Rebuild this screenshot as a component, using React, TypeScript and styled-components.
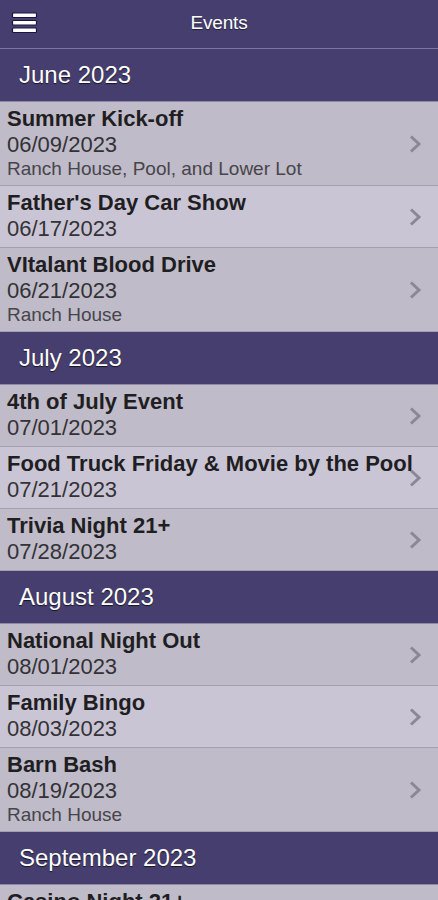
import React from 'react'
import styled, { createGlobalStyle } from 'styled-components'

const GlobalStyle = createGlobalStyle`
  html, body {
    margin: 0;
    padding: 0;
    background: #c9c4d4;
    font-family: "Liberation Sans", Arial, Helvetica, sans-serif;
  }
`

const Page = styled.div`
  width: 438px;
  display: flex;
  flex-direction: column;
`

const TopBar = styled.header`
  height: 48px;
  display: flex;
  align-items: center;
  justify-content: center;
  position: relative;
  background: #463e6e;
  border-bottom: 1px solid #7d77a0;
`

const MenuButton = styled.div`
  position: absolute;
  left: 11px;
  top: 12px;
  width: 27px;
  height: 22px;
`

const Title = styled.div`
  color: #ffffff;
  font-size: 19px;
  letter-spacing: -0.2px;
  margin-top: -2px;
  text-shadow: 0 1px 1px rgba(0, 0, 0, 0.5);
`

const SectionHeader = styled.div`
  height: 52px;
  display: flex;
  align-items: center;
  padding-left: 19px;
  background: #463e6e;
  border-bottom: 1px solid #8e89a6;
  color: #ffffff;
  font-size: 24px;
  text-shadow: 0 1px 1px rgba(0, 0, 0, 0.7);
`

const Row = styled.div<{ $alt: boolean }>`
  position: relative;
  padding: 4px 0 5px 7px;
  background: ${(p) => (p.$alt ? '#cac5d5' : '#bfbbc8')};
  border-bottom: 1px solid #a39fb0;
`

const EventName = styled.div`
  font-size: 22px;
  line-height: 25px;
  font-weight: bold;
  color: #1f1e22;
  white-space: nowrap;
`

const EventDate = styled.div`
  font-size: 22px;
  line-height: 27px;
  color: #333236;
`

const EventPlace = styled.div`
  font-size: 19px;
  line-height: 22px;
  color: #47454b;
`

// row accessory, sits over the end of long titles
const Chevron = styled.svg`
  position: absolute;
  right: 16px;
  top: 50%;
  margin-top: -10px;
  width: 14px;
  height: 20px;
`

type Ev = { name: string; date: string; place?: string }
type Section = { month: string; events: Ev[] }

const sections: Section[] = [
  {
    month: 'June 2023',
    events: [
      { name: 'Summer Kick-off', date: '06/09/2023', place: 'Ranch House, Pool, and Lower Lot' },
      { name: "Father's Day Car Show", date: '06/17/2023' },
      { name: 'VItalant Blood Drive', date: '06/21/2023', place: 'Ranch House' },
    ],
  },
  {
    month: 'July 2023',
    events: [
      { name: '4th of July Event', date: '07/01/2023' },
      { name: 'Food Truck Friday & Movie by the Pool', date: '07/21/2023' },
      { name: 'Trivia Night 21+', date: '07/28/2023' },
    ],
  },
  {
    month: 'August 2023',
    events: [
      { name: 'National Night Out', date: '08/01/2023' },
      { name: 'Family Bingo', date: '08/03/2023' },
      { name: 'Barn Bash', date: '08/19/2023', place: 'Ranch House' },
    ],
  },
  {
    month: 'September 2023',
    events: [{ name: 'Casino Night 21+', date: '09/09/2023' }],
  },
]

const Hamburger = () => (
  <MenuButton>
    <svg width="27" height="22" viewBox="0 0 27 22">
      {[1, 8.5, 16].map((y) => (
        <rect key={y} x="1.5" y={y} width="24" height="4.5" rx="1" fill="#ffffff" stroke="#1b1640" strokeWidth="1.2" />
      ))}
    </svg>
  </MenuButton>
)

const App: React.FC = () => {
  return (
    <Page>
      <GlobalStyle />
      <TopBar>
        <Hamburger />
        <Title>Events</Title>
      </TopBar>
      {sections.map((s) => (
        <React.Fragment key={s.month}>
          <SectionHeader>{s.month}</SectionHeader>
          {s.events.map((e, i) => (
            <Row key={e.name} $alt={i % 2 === 1}>
              <EventName>{e.name}</EventName>
              <EventDate>{e.date}</EventDate>
              {e.place && <EventPlace>{e.place}</EventPlace>}
              <Chevron viewBox="0 0 14 20">
                <path d="M3 2.5 L11 10 L3 17.5" fill="none" stroke="#8b8795" strokeWidth="3" />
              </Chevron>
            </Row>
          ))}
        </React.Fragment>
      ))}
    </Page>
  )
}

export default App
